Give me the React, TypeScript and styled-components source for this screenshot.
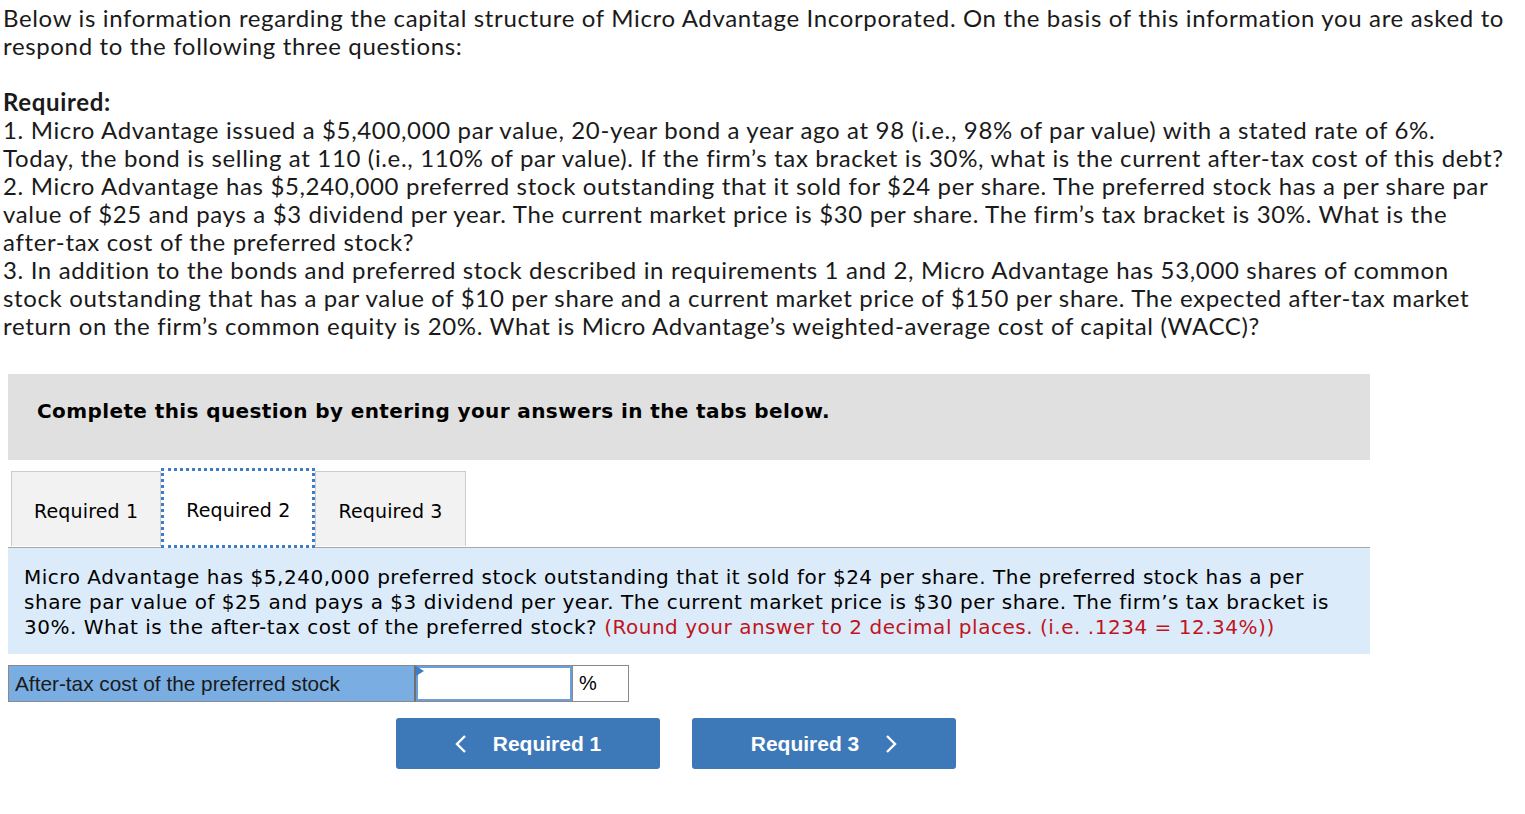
import { createGlobalStyle, styled } from "styled-components"

const Global = createGlobalStyle`
  html, body { margin: 0; padding: 0; background: #fff; }
  body { font-family: "Lato", "Liberation Sans", sans-serif; color: #1a1a1a; }
`

const Page = styled.div`
  padding: 4px 0 40px 3px;
`

const Intro = styled.div`
  font-size: 24px;
  letter-spacing: 0.65px;
  line-height: 28px;
  width: 1506px;
  p { margin: 0; }
  .gap { height: 28px; }
  b { font-weight: 700; }
`

const Widget = styled.div`
  margin: 34px 0 0 5px;
  width: 1362px;
  font-family: "DejaVu Sans", Verdana, sans-serif;
`

const Banner = styled.div`
  background: #e0e0e0;
  height: 86px;
  box-sizing: border-box;
  display: flex;
  align-items: center;
  padding: 0 0 12px 29px;
  font-weight: 700;
  font-size: 20px;
  letter-spacing: 0.4px;
  color: #000;
`

const TabBar = styled.div`
  display: flex;
  margin-top: 11px;
  padding-left: 3px;
  border-bottom: 1px solid #a8a8a8;
  height: 76px;
`

const Tab = styled.div<{ $active?: boolean }>`
  display: flex;
  align-items: center;
  justify-content: center;
  height: 75px;
  padding: 3px 22px 0;
  font-size: 19px;
  letter-spacing: 0.15px;
  color: #000;
  box-sizing: border-box;
  background: ${(p) => (p.$active ? "#fff" : "#f2f2f2")};
  border: ${(p) => (p.$active ? "3px dotted #3d7cc9" : "1px solid #cccccc")};
  border-bottom: ${(p) => (p.$active ? "3px dotted #3d7cc9" : "none")};
  ${(p) => (p.$active ? "margin-top: -3px; height: 80px; position: relative; z-index: 1;" : "")}
`

const Prompt = styled.div`
  background: #dcebf9;
  padding: 17px 16px 14px 16px;
  font-size: 20px;
  letter-spacing: 0.52px;
  line-height: 25px;
  color: #000;
  span { color: #c0141c; }
`

const Row = styled.div`
  display: flex;
  margin-top: 11px;
  height: 37px;
  font-family: "Liberation Sans", Arial, sans-serif;
  font-size: 20.8px;
`

const Label = styled.div`
  width: 406px;
  background: #7aaee2;
  border: 1px solid #8a8a8a;
  border-right: none;
  display: flex;
  align-items: center;
  padding-left: 6px;
  box-sizing: border-box;
  color: #1a1a1a;
`

const InputCell = styled.div`
  position: relative;
  width: 159px;
  border: 1px solid #8a8a8a;
  border-left: 2px solid #707070;
  box-sizing: border-box;
  background: #fff;
`

const Input = styled.input`
  box-sizing: border-box;
  width: 100%;
  height: 100%;
  border: 2px solid #6a9fd9;
  outline: none;
  font-size: 18px;
  padding: 0 6px;
`

const Flag = styled.div`
  position: absolute;
  left: 0;
  top: 0;
  width: 0;
  height: 0;
  border-top: 5px solid transparent;
  border-bottom: 5px solid transparent;
  border-left: 8px solid #3d7cc9;
`

const Unit = styled.div`
  width: 56px;
  border: 1px solid #8a8a8a;
  border-left: none;
  box-sizing: border-box;
  display: flex;
  align-items: center;
  padding-left: 6px;
  font-size: 20px;
  color: #000;
`

const Nav = styled.div`
  display: flex;
  gap: 32px;
  margin: 16px 0 0 388px;
`

const NavButton = styled.button`
  width: 264px;
  height: 51px;
  border: none;
  border-radius: 3px;
  background: #3d78b8;
  color: #fff;
  font-family: "Liberation Sans", Arial, sans-serif;
  font-weight: 700;
  font-size: 21px;
  display: flex;
  align-items: center;
  justify-content: center;
  gap: 26px;
  cursor: pointer;
  svg { display: block; }
`

const Chevron = ({ left }: { left?: boolean }) => (
  <svg width="12" height="20" viewBox="0 0 12 20">
    <path
      d={left ? "M10 2 L2 10 L10 18" : "M2 2 L10 10 L2 18"}
      fill="none"
      stroke="#fff"
      strokeWidth="2.4"
    />
  </svg>
)

export default function App() {
  return (
    <>
      <Global />
      <Page>
        <Intro>
          <p>
            Below is information regarding the capital structure of Micro Advantage Incorporated. On the basis of this information you are asked to respond to the following three questions:
          </p>
          <div className="gap" />
          <p><b>Required:</b></p>
          <p>
            1. Micro Advantage issued a $5,400,000 par value, 20-year bond a year ago at 98 (i.e., 98% of par value) with a stated rate of 6%. Today, the bond is selling at 110 (i.e., 110% of par value). If the firm’s tax bracket is 30%, what is the current after-tax cost of this debt?
          </p>
          <p>
            2. Micro Advantage has $5,240,000 preferred stock outstanding that it sold for $24 per share. The preferred stock has a per share par value of $25 and pays a $3 dividend per year. The current market price is $30 per share. The firm’s tax bracket is 30%. What is the after&#8209;tax cost of the preferred stock?
          </p>
          <p>
            3. In addition to the bonds and preferred stock described in requirements 1 and 2, Micro Advantage has 53,000 shares of common stock outstanding that has a par value of $10 per share and a current market price of $150 per share. The expected after-tax market return on the firm’s common equity is 20%. What is Micro Advantage’s weighted-average cost of capital (WACC)?
          </p>
        </Intro>

        <Widget>
          <Banner>Complete this question by entering your answers in the tabs below.</Banner>
          <TabBar>
            <Tab>Required 1</Tab>
            <Tab $active>Required 2</Tab>
            <Tab>Required 3</Tab>
          </TabBar>
          <Prompt>
            Micro Advantage has $5,240,000 preferred stock outstanding that it sold for $24 per share. The preferred stock has a per share par value of $25 and pays a $3 dividend per year. The current market price is $30 per share. The firm’s tax bracket is 30%. What is the after-tax cost of the preferred stock?{" "}
            <span>(Round your answer to 2 decimal places. (i.e. .1234 = 12.34%))</span>
          </Prompt>
          <Row>
            <Label>After-tax cost of the preferred stock</Label>
            <InputCell>
              <Input type="text" />
              <Flag />
            </InputCell>
            <Unit>%</Unit>
          </Row>
          <Nav>
            <NavButton>
              <Chevron left />
              Required 1
            </NavButton>
            <NavButton>
              Required 3
              <Chevron />
            </NavButton>
          </Nav>
        </Widget>
      </Page>
    </>
  )
}
